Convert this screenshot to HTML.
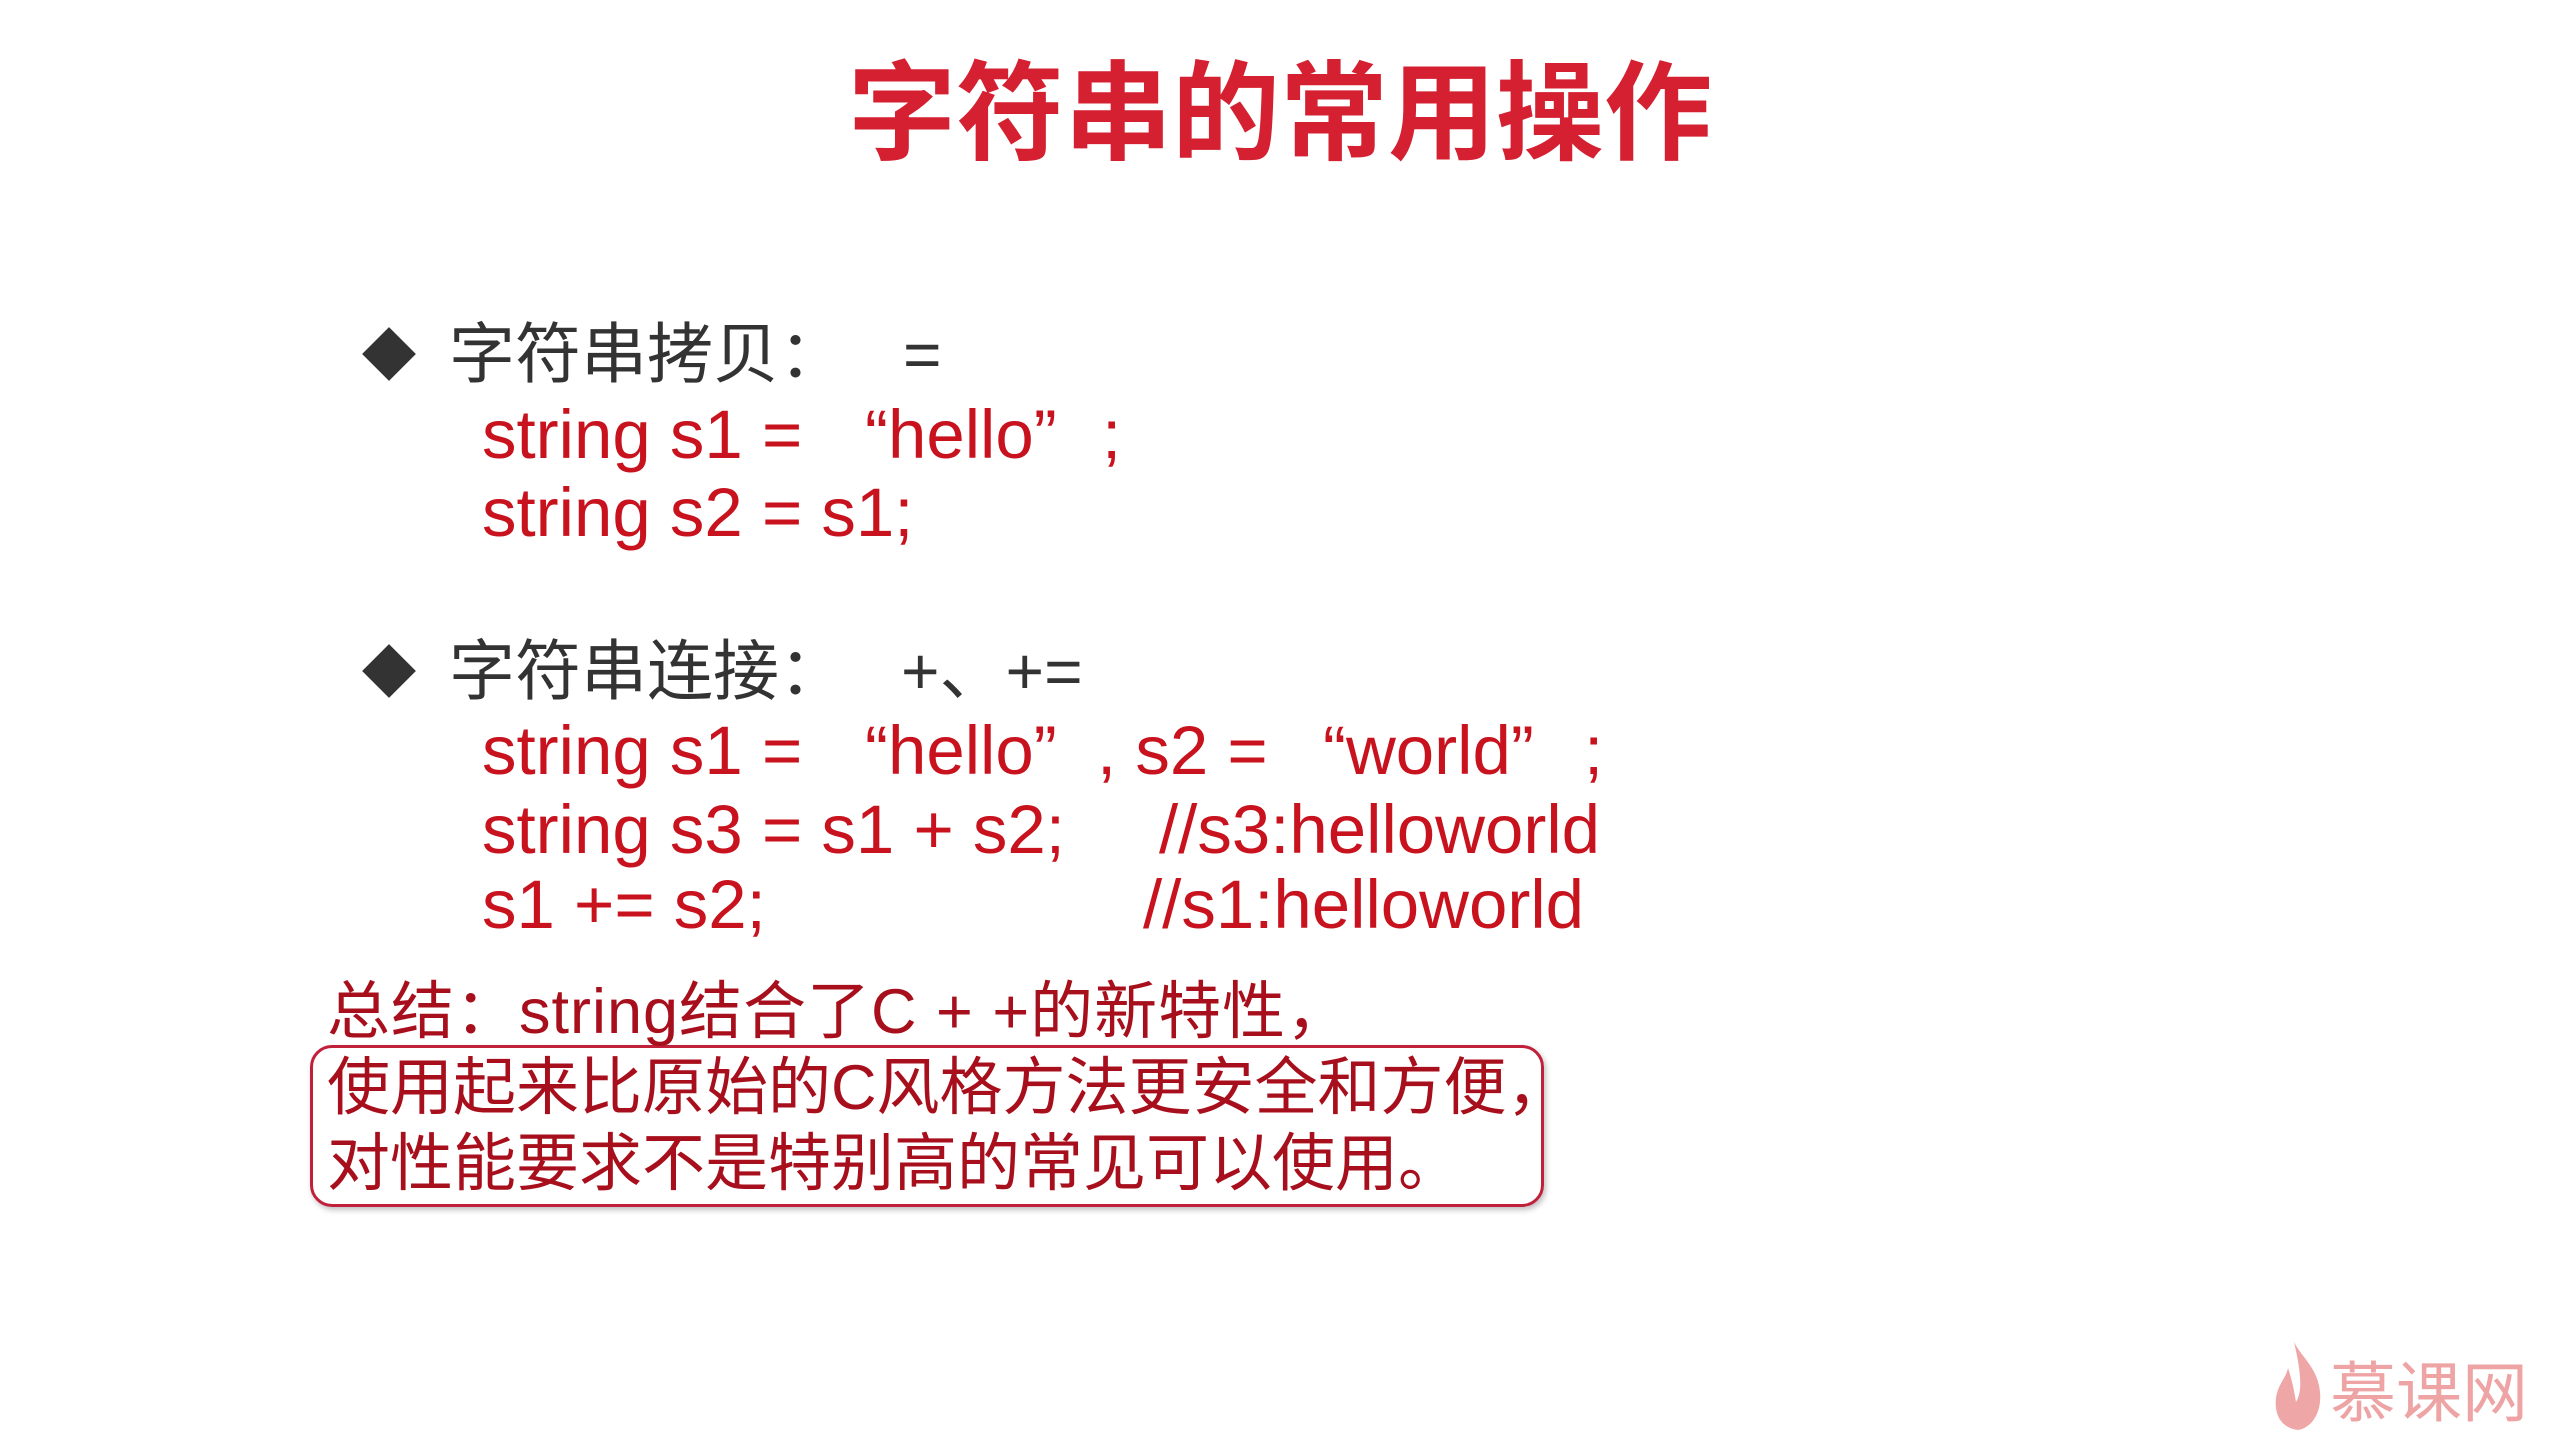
<!DOCTYPE html>
<html><head><meta charset="utf-8"><style>
body{margin:0;width:2560px;height:1440px;background:#fff;position:relative;overflow:hidden;font-family:"Liberation Sans","Noto Sans CJK SC",sans-serif}
.a{position:absolute;white-space:pre;line-height:80px;height:80px}
.h{font-size:66px;color:#333}
.c{font-size:69px;color:#c8121e}
.s{font-size:63px;color:#a80f1c}
.d{position:absolute;width:38px;height:38px;background:#333;transform:rotate(45deg)}
</style></head><body>
<div class="a" style="left:0;width:2560px;text-align:center;top:45px;height:120px;line-height:120px;font-size:108px;font-weight:bold;color:#d42030;font-family:'Noto Sans CJK SC',sans-serif;padding-right:10px">字符串的常用操作</div>

<div class="d" style="left:370px;top:335px"></div>
<div class="a h" style="left:449px;top:314px">字符串拷贝：</div>
<div class="a h" style="left:903px;top:314px">=</div>
<div class="a c" style="left:482px;top:395px">string s1 =</div>
<div class="a c" style="left:865px;top:395px">“hello”</div>
<div class="a c" style="left:1102px;top:395px">;</div>
<div class="a c" style="left:482px;top:473px">string s2 = s1;</div>

<div class="d" style="left:370px;top:652px"></div>
<div class="a h" style="left:449px;top:631px">字符串连接：</div>
<div class="a h" style="left:901px;top:631px">+、+=</div>
<div class="a c" style="left:482px;top:711px">string s1 =</div>
<div class="a c" style="left:865px;top:711px">“hello”</div>
<div class="a c" style="left:1097px;top:711px">, s2 =</div>
<div class="a c" style="left:1323px;top:711px">“world”</div>
<div class="a c" style="left:1584px;top:711px">;</div>
<div class="a c" style="left:482px;top:790px">string s3 = s1 + s2;</div>
<div class="a c" style="left:1159px;top:790px">//s3:helloworld</div>
<div class="a c" style="left:482px;top:865px">s1 += s2;</div>
<div class="a c" style="left:1143px;top:865px">//s1:helloworld</div>

<div style="position:absolute;left:310px;top:1045px;width:1228px;height:156px;border:3px solid #c0203a;border-radius:22px;box-shadow:2px 3px 6px rgba(0,0,0,.25)"></div>
<div class="a s" style="left:327px;top:972px;letter-spacing:1px">总结：string结合了C + +的新特性，</div>
<div class="a s" style="left:327px;top:1048px">使用起来比原始的C风格方法更安全和方便，</div>
<div class="a s" style="left:327px;top:1124px">对性能要求不是特别高的常见可以使用。</div>

<svg style="position:absolute;left:2272px;top:1340px" width="52" height="92" viewBox="0 0 52 92"><path d="M22 2 C30 18 46 28 48 52 C50 72 40 88 26 90 C10 88 2 76 4 58 C6 44 14 38 16 28 C20 40 22 50 24 62 C30 52 30 36 22 2Z" fill="#efa6a6"/></svg>
<div class="a" style="left:2330px;top:1348px;font-size:66px;color:#eea4a4;font-family:'Noto Sans CJK SC',sans-serif">慕课网</div>
</body></html>
